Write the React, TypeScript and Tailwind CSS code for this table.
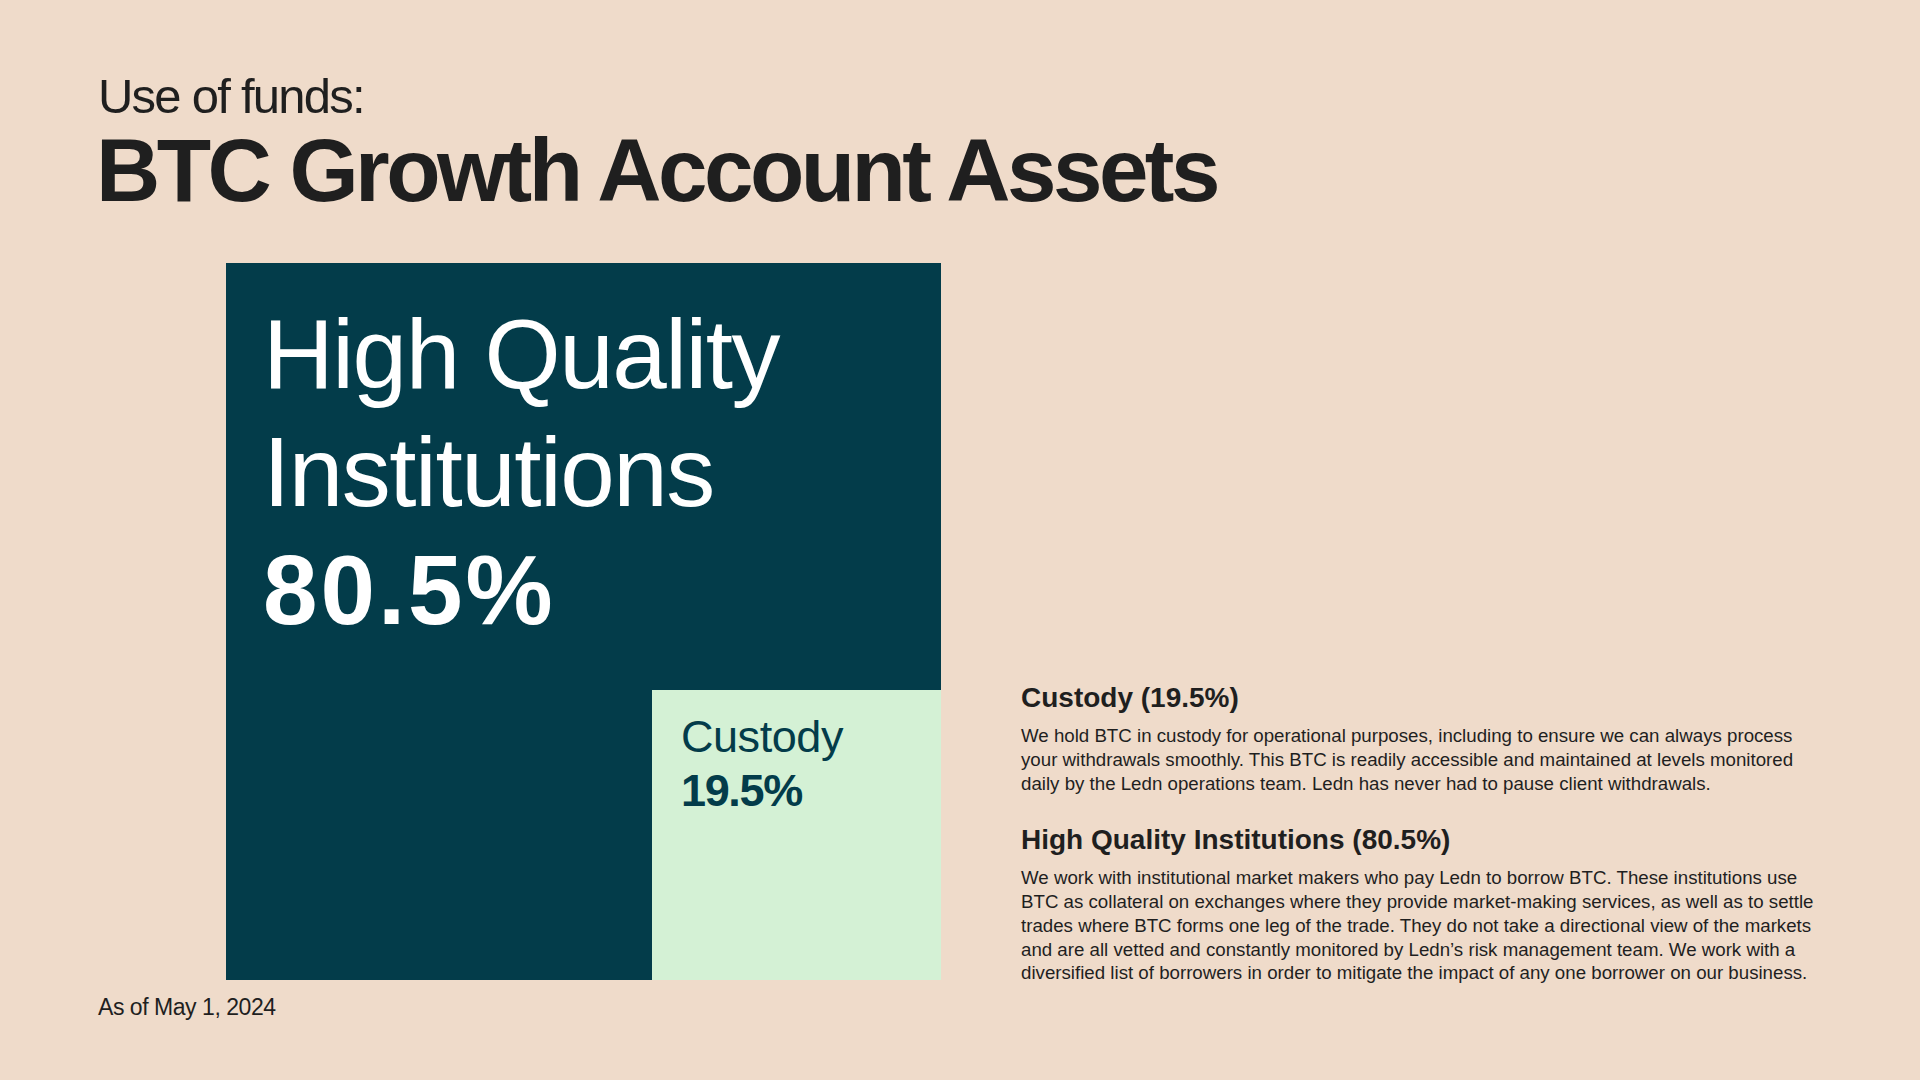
import React from 'react';

const custodyText = [
  'We hold BTC in custody for operational purposes, including to ensure we can always process',
  'your withdrawals smoothly. This BTC is readily accessible and maintained at levels monitored',
  'daily by the Ledn operations team. Ledn has never had to pause client withdrawals.',
];

const institutionsText = [
  'We work with institutional market makers who pay Ledn to borrow BTC. These institutions use',
  'BTC as collateral on exchanges where they provide market-making services, as well as to settle',
  'trades where BTC forms one leg of the trade. They do not take a directional view of the markets',
  'and are all vetted and constantly monitored by Ledn’s risk management team. We work with a',
  'diversified list of borrowers in order to mitigate the impact of any one borrower on our business.',
];

const Section: React.FC<{ title: string; lines: string[]; className?: string }> = ({ title, lines, className }) => (
  <div className={className}>
    <h3 className="text-[28px] leading-[30px] font-bold">{title}</h3>
    <p className="mt-[11px] text-[18.7px] leading-[23.7px] whitespace-nowrap">
      {lines.map((line, i) => (
        <React.Fragment key={i}>
          {line}
          {i < lines.length - 1 && <br />}
        </React.Fragment>
      ))}
    </p>
  </div>
);

const App: React.FC = () => {
  return (
    <div className="w-[1920px] h-[1080px] overflow-hidden bg-[#efdbca] text-[#1f1f1f] font-['Liberation_Sans',Arial,sans-serif] pt-[69px] pl-[98px]">
      {/* Header */}
      <h2 className="text-[49px] leading-[54px] tracking-[-0.036em]">Use of funds:</h2>
      <h1 className="-ml-[2px] text-[89px] leading-[94px] font-bold tracking-[-0.04em]">
        BTC Growth Account Assets
      </h1>

      {/* Chart + description */}
      <div className="mt-[46px] flex items-end">
        <div className="ml-[128px] w-[715px] h-[717px] bg-[#033c4a] flex flex-col">
          <div className="pt-[32px] pl-[37px] text-white text-[98px] leading-[118px] tracking-[-0.015em]">
            <div>High Quality</div>
            <div>Institutions</div>
            <div className="font-bold tracking-[0.03em]">80.5%</div>
          </div>
          <div className="mt-auto self-end w-[289px] h-[290px] bg-[#d4f1d5] pt-[20px] pl-[29px] text-[#033c4a] text-[45px] leading-[54px]">
            <div className="tracking-[-0.01em]">Custody</div>
            <div className="font-bold tracking-[-0.03em]">19.5%</div>
          </div>
        </div>

        <div className="ml-[80px] -mb-[5px]">
          <Section title="Custody (19.5%)" lines={custodyText} />
          <Section title="High Quality Institutions (80.5%)" lines={institutionsText} className="mt-[30px]" />
        </div>
      </div>

      {/* Footer */}
      <p className="mt-[13px] text-[23px] leading-[28px] tracking-[-0.02em]">As of May 1, 2024</p>
    </div>
  );
};

export default App;
